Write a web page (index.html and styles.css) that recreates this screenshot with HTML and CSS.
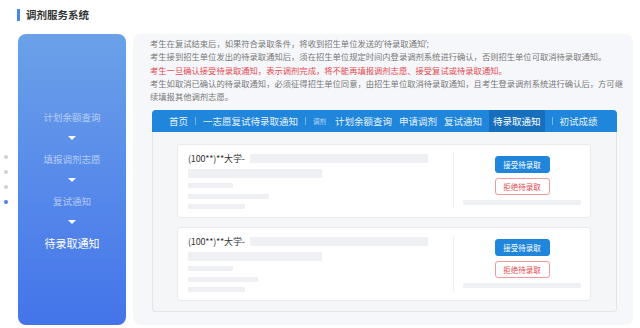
FILE: index.html
```html
<!DOCTYPE html>
<html lang="zh-CN">
<head>
  <meta charset="UTF-8">
  <title>调剂服务系统</title>
  <link rel="stylesheet" href="styles.css">
</head>
<body>
  <h1 class="page-title">调剂服务系统</h1>

  <div class="main">
    <!-- step dots -->
    <div class="dots">
      <span class="dot"></span>
      <span class="dot"></span>
      <span class="dot"></span>
      <span class="dot active"></span>
    </div>

    <!-- step list -->
    <div class="steps">
      <div class="step">计划余额查询</div>
      <div class="arrow"></div>
      <div class="step">填报调剂志愿</div>
      <div class="arrow"></div>
      <div class="step">复试通知</div>
      <div class="arrow"></div>
      <div class="step current">待录取通知</div>
    </div>

    <!-- content -->
    <div class="content">
      <div class="desc">
        <p>考生在复试结束后，如果符合录取条件，将收到招生单位发送的‘待录取通知’;</p>
        <p>考生接到招生单位发出的待录取通知后，须在招生单位规定时间内登录调剂系统进行确认，否则招生单位可取消待录取通知。</p>
        <p class="warn">考生一旦确认接受待录取通知，表示调剂完成，将不能再填报调剂志愿、接受复试或待录取通知。</p>
        <p>考生如取消已确认的待录取通知，必须征得招生单位同意，由招生单位取消待录取通知，且考生登录调剂系统进行确认后，方可继续填报其他调剂志愿。</p>
      </div>

      <div class="demo">
        <nav class="nav">
          <span class="nav-item">首页</span>
          <span class="sep"></span>
          <span class="nav-item">一志愿复试待录取通知</span>
          <span class="sep"></span>
          <span class="nav-tag">调剂</span>
          <span class="nav-item">计划余额查询</span>
          <span class="nav-item">申请调剂</span>
          <span class="nav-item">复试通知</span>
          <span class="nav-item active">待录取通知</span>
          <span class="sep"></span>
          <span class="nav-item">初试成绩</span>
        </nav>

        <div class="cards">
          <div class="card">
            <div class="card-info">
              <div class="row-title"><span class="school">(100**)**大学-</span><span class="bar bar-name"></span></div>
              <div class="bar bar-major"></div>
              <div class="bar bar-s1"></div>
              <div class="bar bar-s2"></div>
              <div class="bar bar-s3"></div>
            </div>
            <div class="card-actions">
              <button class="btn btn-accept">接受待录取</button>
              <button class="btn btn-reject">拒绝待录取</button>
              <div class="bar bar-time"></div>
            </div>
          </div>

          <div class="card">
            <div class="card-info">
              <div class="row-title"><span class="school">(100**)**大学-</span><span class="bar bar-name"></span></div>
              <div class="bar bar-major"></div>
              <div class="bar bar-s1"></div>
              <div class="bar bar-s2 short"></div>
              <div class="bar bar-s3"></div>
            </div>
            <div class="card-actions">
              <button class="btn btn-accept">接受待录取</button>
              <button class="btn btn-reject">拒绝待录取</button>
              <div class="bar bar-time"></div>
            </div>
          </div>
        </div>
      </div>
    </div>
  </div>
</body>
</html>
```

FILE: styles.css
```css
/* GLOBAL */
:root {
  --blue: #1f86dc;
  --blue-dark: #176ebd;
  --red: #e5484d;
  --skeleton: #eff0f3;
  --font: "Noto Sans CJK SC", "Noto Sans", sans-serif;
  --font-latin: "Noto Sans", "Noto Sans CJK SC", sans-serif;
}

html, body {
  margin: 0;
  padding: 0;
  background: #fff;
  font-family: var(--font);
  color: #333;
}

/* TITLE */
.page-title {
  margin: 9px 0 0 17px;
  padding-left: 6px;
  border-left: 3px solid #4a86e8;
  font-size: 10.5px;
  line-height: 12px;
  font-weight: bold;
  color: #333;
}

/* MAIN ROW */
.main {
  display: flex;
  margin-top: 13px;
  height: 291px;
}

.dots {
  width: 18px;
  display: flex;
  flex-direction: column;
  align-items: center;
  justify-content: center;
  gap: 11px;
  margin-left: -3px;
  margin-right: 3px;
}
.dot {
  width: 4px;
  height: 4px;
  border-radius: 50%;
  background: #cdd1d9;
}
.dot.active {
  background: #4a80e3;
}

/* STEPS PANEL */
.steps {
  width: 108px;
  border-radius: 8px;
  background: linear-gradient(180deg, #6ba1e9 0%, #4474ea 100%);
  display: flex;
  flex-direction: column;
  align-items: center;
  justify-content: center;
  padding-top: 1px;
}
.step {
  font-size: 9.5px;
  line-height: 21px;
  color: rgba(255, 255, 255, 0.55);
}
.step.current {
  font-size: 11px;
  color: #fff;
}
.arrow {
  height: 21px;
  display: flex;
  align-items: center;
  justify-content: center;
}
.arrow::before {
  content: "";
  border-left: 4px solid transparent;
  border-right: 4px solid transparent;
  border-top: 4px solid #fff;
}

/* CONTENT PANEL */
.content {
  width: 500px;
  margin-left: 7px;
  border-radius: 8px;
  background: #f6f7fb;
  padding: 3px 6px 0 17px;
  box-sizing: border-box;
}

.desc {
  width: 477px;
  font-family: var(--font-latin);
}
.desc p {
  margin: 0;
  font-size: 8.3px;
  line-height: 13.3px;
  color: #777;
}
.desc p.warn {
  color: var(--red);
}

/* DEMO WINDOW */
.demo {
  width: 465px;
  margin: 7px 0 0 2px;
}

.nav {
  height: 22px;
  background: var(--blue);
  border-radius: 4px 4px 0 0;
  display: flex;
  align-items: center;
  gap: 7px;
  padding-left: 17px;
  font-size: 9.5px;
  color: rgba(255, 255, 255, 0.92);
}
.nav-item {
  line-height: 22px;
}
.nav-item.active {
  background: var(--blue-dark);
  padding: 0 4px;
  color: #fff;
}
.nav-tag {
  font-size: 6.5px;
  color: rgba(255, 255, 255, 0.7);
  margin-right: 2px;
}
.sep {
  width: 1px;
  height: 8px;
  background: rgba(255, 255, 255, 0.4);
}

.cards {
  background: #f5f6f8;
  border: 1px solid #e2e5ea;
  border-top: none;
  border-radius: 0 0 4px 4px;
  padding: 12px 25px 10px 24px;
  display: flex;
  flex-direction: column;
  gap: 9px;
}

.card {
  height: 74px;
  box-sizing: border-box;
  background: #fff;
  border: 1px solid #e8eaee;
  border-radius: 3px;
  display: flex;
}

.card-info {
  flex: 1;
  padding: 7px 0 0 10px;
}
.row-title {
  height: 12px;
  display: flex;
  align-items: center;
  gap: 5px;
}
.school {
  font-size: 9px;
  color: #333;
  letter-spacing: -0.2px;
}

.bar {
  background: var(--skeleton);
  border-radius: 1px;
}
.bar-name {
  width: 178px;
  height: 9px;
}
.bar-major {
  width: 134px;
  height: 9px;
  margin-top: 5px;
}
.bar-s1 {
  width: 45px;
  height: 5px;
  margin-top: 5px;
}
.bar-s2 {
  width: 81px;
  height: 5px;
  margin-top: 6px;
}
.bar-s2.short {
  width: 70px;
}
.bar-s3 {
  width: 57px;
  height: 5px;
  margin-top: 5px;
}

.card-actions {
  width: 136px;
  margin: 8px 0 9px;
  border-left: 1px solid #eeeff2;
  display: flex;
  flex-direction: column;
  align-items: center;
  padding-top: 3px;
  gap: 5px;
}
.btn {
  width: 55px;
  height: 17px;
  padding: 0;
  border-radius: 3px;
  font-family: var(--font);
  font-size: 7.5px;
  line-height: 15px;
  cursor: pointer;
}
.btn-accept {
  background: var(--blue);
  border: 1px solid var(--blue);
  color: #fff;
}
.btn-reject {
  background: #fff;
  border: 1px solid #f19a9a;
  color: var(--red);
}
.bar-time {
  width: 118px;
  height: 5px;
}
```
